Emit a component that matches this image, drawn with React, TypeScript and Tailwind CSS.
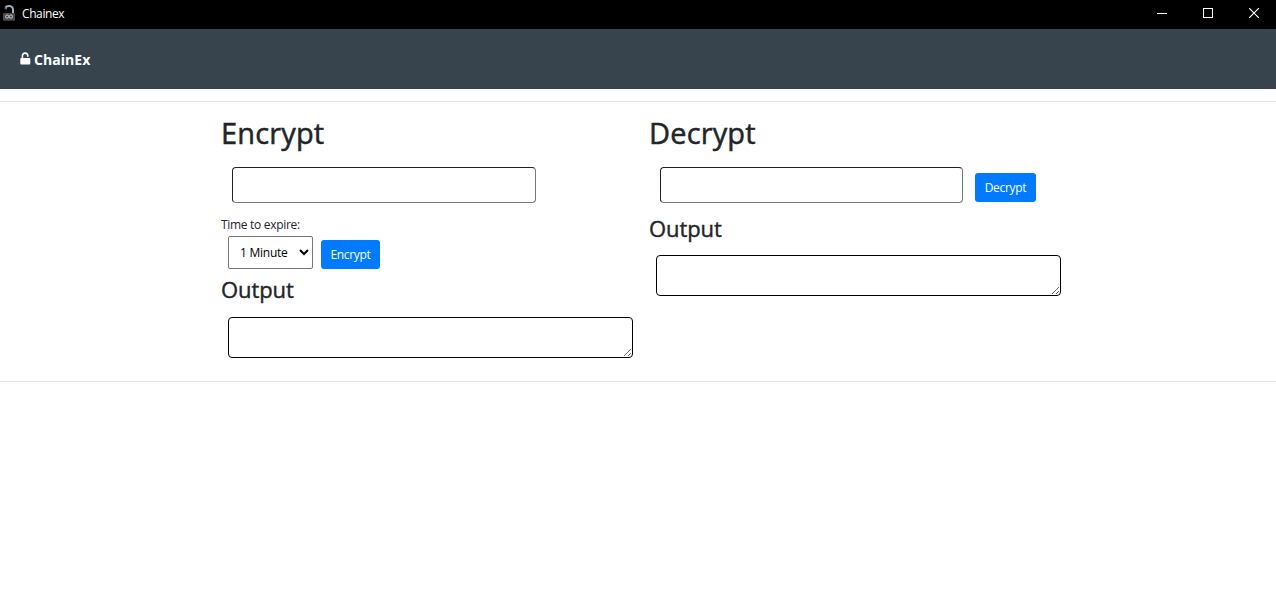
import React from "react";

function AppIcon() {
  return (
    <svg width="14" height="18" viewBox="0 0 14 18" className="block">
      <path d="M3.4 3.6C4.4 2.2 6 1.9 7.4 2c2.4.2 3.6 1.8 3.6 4v4" fill="none" stroke="#9fb0c0" strokeWidth="2" />
      <path d="M2.6 4.2l2.4 .8" stroke="#5e666e" strokeWidth="1.4" />
      <rect x="1" y="9" width="12" height="7.8" rx="1" fill="#4a4a4c" />
      <circle cx="5.1" cy="12.6" r="1.6" fill="none" stroke="#c9c9c9" strokeWidth="1" />
      <circle cx="8.9" cy="12.6" r="1.6" fill="none" stroke="#c9c9c9" strokeWidth="1" />
    </svg>
  );
}

function UnlockIcon() {
  return (
    <svg width="11" height="13" viewBox="0 0 11 13" className="block">
      <path d="M2.4 7V3.8a2.7 2.7 0 0 1 5.4 0v.4" fill="none" stroke="#fff" strokeWidth="1.6" strokeLinecap="round" />
      <rect x="0.3" y="6" width="10" height="6.6" rx="1" fill="#fff" />
    </svg>
  );
}

function TitleBar() {
  return (
    <div className="flex h-[29px] items-start bg-black text-white">
      <div className="pt-[4px] pl-[2px]">
        <AppIcon />
      </div>
      <span className="ml-[6px] pt-[5px] text-[12px] leading-[18px] tracking-[-0.4px]">Chainex</span>
      <div className="ml-auto flex" aria-label="Window controls">
        <div className="flex w-[46px] justify-center pt-[8px]">
          <svg width="10" height="10" shapeRendering="crispEdges"><path d="M0 5.5h10" stroke="#fff" /></svg>
        </div>
        <div className="flex w-[46px] justify-center pt-[8px]">
          <svg width="10" height="10" shapeRendering="crispEdges"><rect x=".5" y=".5" width="9" height="9" fill="none" stroke="#fff" /></svg>
        </div>
        <div className="flex w-[45px] justify-center pt-[8px]">
          <svg width="10" height="10" className="ml-[1px]"><path d="M0 0l10 10M10 0l-10 10" stroke="#fff" strokeWidth="1.2" /></svg>
        </div>
      </div>
    </div>
  );
}

const heading = "text-[29px] leading-[38px] [-webkit-text-stroke:0.5px_#212529]";
const subheading = "text-[22px] leading-[29px] tracking-[-0.1px] [-webkit-text-stroke:0.4px_#212529]";
const input = "block h-[36px] rounded-[4px] border border-t-[#202124] border-l-[#202124] border-r-[#767676] border-b-[#767676] bg-white px-3 text-[12px] outline-none";
const output = "block h-[41px] w-[405px] resize rounded-[4px] border border-black bg-white px-3 py-2 text-[12px] outline-none";
const button = "h-[29px] rounded-[3px] bg-[#007bff] text-[12px] leading-[29px] tracking-[-0.3px] text-white";

export default function App() {
  return (
    <div className="flex h-[592px] flex-col overflow-hidden bg-white font-['Open_Sans','Noto_Sans',sans-serif] text-[#212529]">
      <TitleBar />
      <nav className="flex h-[60px] items-start bg-[#38444d] pl-[20px] text-white">
        <div className="pt-[23px]">
          <UnlockIcon />
        </div>
        <span className="ml-[3px] pt-[20px] text-[14px] leading-[22px] font-bold tracking-[0.05px]">ChainEx</span>
      </nav>
      <main className="mt-[12px] flex h-[281px] border-y border-[#e5e5e5] pl-[221px]">
        <section className="w-[428px] pt-[12px]">
          <h1 className={heading}><span className="tracking-[0.15px]">Encrypt</span></h1>
          <input aria-label="Text to encrypt" className={`${input} mt-[15px] ml-[11px] w-[304px]`} />
          <label htmlFor="expire" className="mt-[13px] block text-[12px] leading-[18px] tracking-[-0.3px]">Time to expire:</label>
          <div className="mt-[2px] flex items-end pl-[7px]">
            <select id="expire" className="h-[33px] w-[85px] rounded-[2px] border border-[#767676] bg-white pl-[7px] text-[12px] tracking-[-0.25px] text-black outline-none">
              <option>1 Minute</option>
            </select>
            <button className={`${button} ml-[8px] w-[59px]`}>Encrypt</button>
          </div>
          <h2 className={`${subheading} mt-[6px]`}>Output</h2>
          <textarea aria-label="Encrypted output" className={`${output} mt-[13px] ml-[7px]`} />
        </section>
        <section className="w-[428px] pt-[12px]">
          <h1 className={heading}><span className="tracking-[0.15px]">Decrypt</span></h1>
          <div className="mt-[15px] flex pl-[11px]">
            <input aria-label="Text to decrypt" className={`${input} w-[303px]`} />
            <button className={`${button} mt-[6px] ml-[12px] w-[61px]`}>Decrypt</button>
          </div>
          <h2 className={`${subheading} mt-[11px]`}>Output</h2>
          <textarea aria-label="Decrypted output" className={`${output} mt-[12px] ml-[7px]`} />
        </section>
      </main>
    </div>
  );
}
